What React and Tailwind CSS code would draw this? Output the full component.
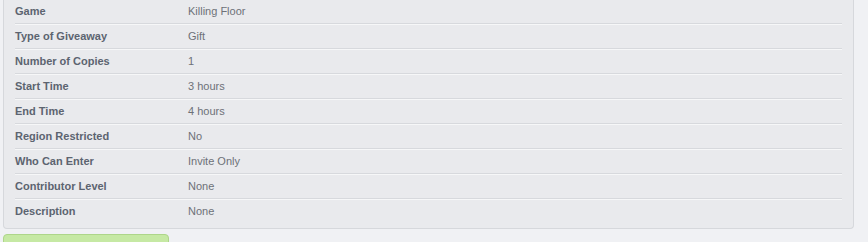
const ROWS = [
  ['Game', 'Killing Floor'],
  ['Type of Giveaway', 'Gift'],
  ['Number of Copies', '1'],
  ['Start Time', '3 hours'],
  ['End Time', '4 hours'],
  ['Region Restricted', 'No'],
  ['Who Can Enter', 'Invite Only'],
  ['Contributor Level', 'None'],
  ['Description', 'None'],
];

export default function App() {
  return (
    <div className="h-[242px] overflow-hidden bg-[#f0f1f4] px-[3px] font-['Liberation_Sans',Arial,sans-serif] text-[11px]">
      <div className="-mt-[1px] w-[851px] rounded-b-[4px] border border-t-0 border-[#d6d8dc] bg-[#e9eaed] px-[11px] pb-[4px]">
        {ROWS.map(([label, value], i) => (
          <div
            key={label}
            className={`flex h-[25px] items-center ${i < ROWS.length - 1 ? 'border-b border-[#d7d9dd] shadow-[0_1px_0_#f6f7f8]' : ''}`}
          >
            <div className="w-[173px] font-bold text-[#5c6470]">{label}</div>
            <div className="text-[#6d7178]">{value}</div>
          </div>
        ))}
      </div>
      <div className="mt-[5px] h-[20px] w-[166px] rounded-t-[4px] border border-[#aed68a] bg-[#c6e9a4]" />
    </div>
  );
}
